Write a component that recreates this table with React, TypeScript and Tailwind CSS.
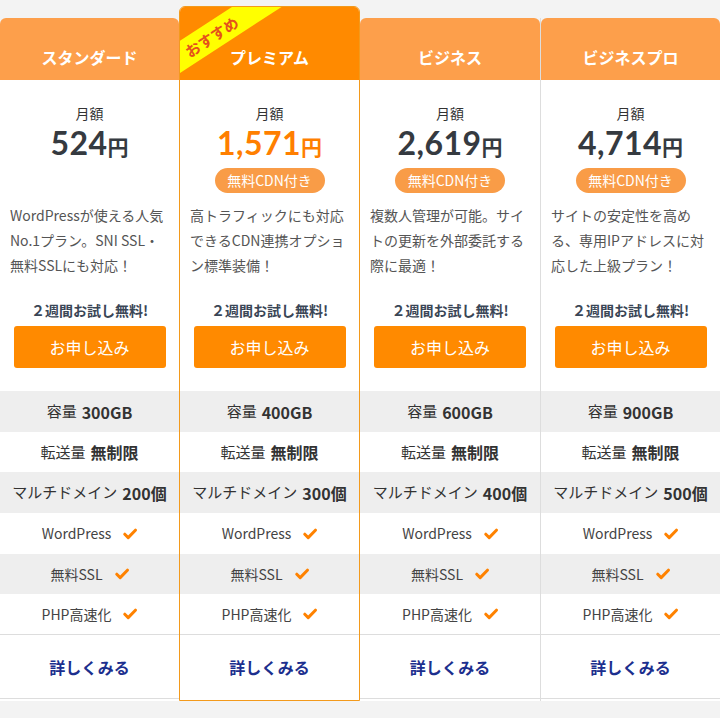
const plans = [
  {
    name: 'スタンダード',
    price: '524',
    cdn: false,
    desc: ['WordPressが使える人気', 'No.1プラン。SNI SSL・', '無料SSLにも対応！'],
    storage: '300GB',
    domains: '200個',
  },
  {
    name: 'プレミアム',
    price: '1,571',
    cdn: true,
    featured: true,
    desc: ['高トラフィックにも対応', 'できるCDN連携オプショ', 'ン標準装備！'],
    storage: '400GB',
    domains: '300個',
  },
  {
    name: 'ビジネス',
    price: '2,619',
    cdn: true,
    desc: ['複数人管理が可能。サイ', 'トの更新を外部委託する', '際に最適！'],
    storage: '600GB',
    domains: '400個',
  },
  {
    name: 'ビジネスプロ',
    price: '4,714',
    cdn: true,
    desc: ['サイトの安定性を高め', 'る、専用IPアドレスに対', '応した上級プラン！'],
    storage: '900GB',
    domains: '500個',
  },
];

function Check() {
  return (
    <svg width="14" height="12" viewBox="0 0 14 12" className="ml-3 shrink-0">
      <path
        d="M1.8 6.2 L5.2 9.6 L12.4 2.2"
        fill="none"
        stroke="#ff8200"
        strokeWidth="3"
        strokeLinecap="round"
        strokeLinejoin="round"
      />
    </svg>
  );
}

type Plan = (typeof plans)[number] & { featured?: boolean };

function Column({ plan, widthClass, borderClass }: { plan: Plan; widthClass: string; borderClass: string }) {
  const featured = !!plan.featured;
  return (
    <div className={`flex flex-col ${widthClass} ${featured ? 'pt-[6px]' : 'pt-[18px]'}`}>
      <div
        className={`flex flex-col flex-1 ${
          featured ? 'border border-[#f39a1c] rounded-t-[6px]' : borderClass
        }`}
      >
        {/* header */}
        {featured ? (
          <div className="relative h-[73px] overflow-hidden rounded-t-[5px] bg-[#ff8a00] flex items-end justify-center pb-[12px]">
            <div className="absolute left-[-36px] top-[11px] w-[150px] h-[27px] -rotate-[33deg] bg-[#ffff00] flex items-center justify-center">
              <span className="text-[15px] font-bold text-[#e5511c] leading-[16px] pr-[18px]">おすすめ</span>
            </div>
            <span className="text-white text-[16px] font-bold leading-[22px]">{plan.name}</span>
          </div>
        ) : (
          <div className="h-[62px] rounded-t-[6px] bg-[#fd9f4b] flex items-end justify-center pb-[12px]">
            <span className="text-white text-[16px] font-bold leading-[22px]">{plan.name}</span>
          </div>
        )}

        {/* body */}
        <div className="bg-white flex flex-col flex-1">
          <div className="h-[311px] flex flex-col items-center pt-[23px]">
            <div className="text-[14px] leading-[20px] text-[#333]">月額</div>
            <div
              className={`mt-[2px] h-[36px] flex items-baseline font-bold ${
                featured ? 'text-[#ff7f00]' : 'text-[#353a40]'
              }`}
            >
              <span className="font-[Lato] text-[32px] leading-[36px] tracking-[0.5px]">{plan.price}</span>
              <span className="text-[21px] leading-[36px]">円</span>
            </div>
            <div className="mt-[7px] h-[25px]">
              {plan.cdn && (
                <div className="h-[25px] w-[110px] rounded-full bg-[#f99c47] text-white text-[14px] leading-[25px] text-center">
                  無料CDN付き
                </div>
              )}
            </div>
            <div className="mt-[10px] w-full px-[10px] text-[14px] leading-[25px] text-[#555] h-[75px]">
              {plan.desc.map((line) => (
                <div key={line} className="whitespace-nowrap">
                  {line}
                </div>
              ))}
            </div>
            <div className="mt-[22px] text-[14px] leading-[20px] font-bold text-[#3a4656]">２週間お試し無料!</div>
            <button className="mt-[6px] h-[42px] w-[152px] rounded-[3px] bg-[#ff8a00] text-white text-[16px]">
              お申し込み
            </button>
          </div>

          {/* feature rows */}
          <div className="flex flex-col text-[15px] text-[#333]">
            <div className="h-[41px] bg-[#eeeeee] flex items-center justify-center">
              容量<span className="ml-[5px] text-[16px] font-bold">{plan.storage}</span>
            </div>
            <div className="h-[40px] bg-white flex items-center justify-center">
              転送量<span className="ml-[5px] text-[16px] font-bold">無制限</span>
            </div>
            <div className="h-[41px] bg-[#eeeeee] flex items-center justify-center">
              マルチドメイン<span className="ml-[5px] text-[16px] font-bold">{plan.domains}</span>
            </div>
            <div className="h-[41px] bg-white flex items-center justify-center text-[14px] text-[#444]">
              WordPress
              <Check />
            </div>
            <div className="h-[40px] bg-[#eeeeee] flex items-center justify-center text-[14px] text-[#444]">
              無料SSL
              <Check />
            </div>
            <div className="h-[41px] bg-white flex items-center justify-center text-[14px] text-[#444] border-b border-[#dddddd]">
              PHP高速化
              <Check />
            </div>
          </div>

          <div
            className={`h-[64px] flex items-center justify-center text-[16px] font-bold text-[#1c2f8e] ${
              featured ? '' : 'border-b border-[#dddddd]'
            }`}
          >
            詳しくみる
          </div>
        </div>
      </div>
    </div>
  );
}

export default function App() {
  return (
    <div
      className="w-[720px] h-[718px] bg-[#f3f3f3] overflow-hidden"
      style={{ fontFamily: '"Noto Sans CJK JP", "Noto Sans", sans-serif' }}
    >
      <div className="flex h-[701px]">
        <Column plan={plans[0]} widthClass="w-[179px]" borderClass="" />
        <Column plan={plans[1]} widthClass="w-[181px]" borderClass="" />
        <Column plan={plans[2]} widthClass="w-[181px]" borderClass="border-r border-[#dddddd]" />
        <Column plan={plans[3]} widthClass="w-[179px]" borderClass="" />
      </div>
    </div>
  );
}
